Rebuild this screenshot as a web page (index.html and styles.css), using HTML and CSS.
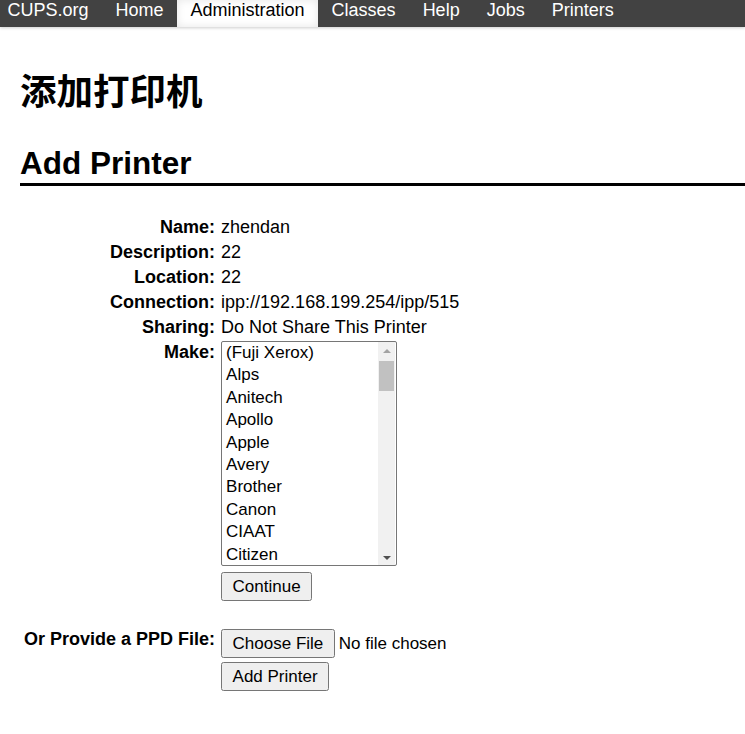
FILE: index.html
```
<!DOCTYPE html>
<html lang="zh">
<head>
<meta charset="utf-8">
<title>添加打印机 - CUPS</title>
<link rel="stylesheet" href="styles.css">
</head>
<body>
<div class="header">
  <ul class="nav">
    <li><a class="first" href="#">CUPS.org</a></li>
    <li><a href="#">Home</a></li>
    <li><a class="active" href="#">Administration</a></li>
    <li><a href="#">Classes</a></li>
    <li><a href="#">Help</a></li>
    <li><a href="#">Jobs</a></li>
    <li><a href="#">Printers</a></li>
  </ul>
</div>
<div class="body">
  <h1 class="title">添加打印机</h1>
  <h2 class="title2">Add Printer</h2>
  <form class="form">
    <table class="tbl">
      <tr><th class="label">Name:</th><td>zhendan</td></tr>
      <tr><th class="label">Description:</th><td>22</td></tr>
      <tr><th class="label">Location:</th><td>22</td></tr>
      <tr><th class="label">Connection:</th><td>ipp://192.168.199.254/ipp/515</td></tr>
      <tr><th class="label">Sharing:</th><td>Do Not Share This Printer</td></tr>
      <tr>
        <th class="label">Make:</th>
        <td>
          <div class="listbox">
            <select class="makes" name="PPD_MAKE" size="10">
              <option>(Fuji Xerox)</option>
              <option>Alps</option>
              <option>Anitech</option>
              <option>Apollo</option>
              <option>Apple</option>
              <option>Avery</option>
              <option>Brother</option>
              <option>Canon</option>
              <option>CIAAT</option>
              <option>Citizen</option>
              <option>Compaq</option>
              <option>DEC</option>
              <option>Dell</option>
              <option>Dymo</option>
              <option>Dymo-CoStar</option>
              <option>Epson</option>
              <option>Fujifilm</option>
              <option>Fujitsu</option>
              <option>Generic</option>
              <option>Genicom</option>
              <option>Gestetner</option>
              <option>Heidelberg</option>
              <option>Hitachi</option>
              <option>HP</option>
              <option>IBM</option>
              <option>Imagen</option>
              <option>Imagistics</option>
              <option>InfoPrint</option>
              <option>Infotec</option>
              <option>Intellitech</option>
              <option>Kodak</option>
              <option>KONICA MINOLTA</option>
              <option>Kyocera</option>
              <option>Lanier</option>
              <option>Lexmark</option>
              <option>Minolta</option>
              <option>Minolta QMS</option>
              <option>Mitsubishi</option>
              <option>NEC</option>
              <option>NRG</option>
              <option>Oce</option>
              <option>Oki</option>
              <option>Olivetti</option>
              <option>Olympus</option>
              <option>Panasonic</option>
              <option>PCPI</option>
              <option>Pentax</option>
              <option>QMS</option>
              <option>Raven</option>
              <option>Ricoh</option>
              <option>Samsung</option>
              <option>Savin</option>
              <option>Seiko</option>
              <option>Sharp</option>
              <option>SiPix</option>
              <option>Sony</option>
              <option>Star</option>
              <option>Tally</option>
              <option>Tektronix</option>
              <option>TOSHIBA</option>
              <option>Xerox</option>
              <option>Zebra</option>
            </select>
            <span class="sbar" aria-hidden="true">
              <span class="sb-btn"><span class="arrow-up"></span></span>
              <span class="sb-track"><span class="sb-thumb"></span></span>
              <span class="sb-btn"><span class="arrow-down"></span></span>
            </span>
          </div>
          <input class="btn" type="button" value="Continue">
        </td>
      </tr>
      <tr><td></td><td class="spacer">&nbsp;</td></tr>
      <tr>
        <th class="label">Or Provide a PPD File:</th>
        <td><input class="file" type="file" name="PPD_FILE"></td>
      </tr>
      <tr><td></td><td><input class="btn" type="button" value="Add Printer"></td></tr>
    </table>
  </form>
</div>
</body>
</html>
```

FILE: styles.css
```
html, body {
  margin: 0;
  padding: 0;
  background: #fff;
  color: #000;
  font-family: "Liberation Sans", Arial, "Noto Sans CJK SC", sans-serif;
  font-size: 18px;
}

.header {
  background: #424242;
  height: 27px;
  box-shadow: 0 1px 3px rgba(0, 0, 0, 0.2);
}

.nav {
  list-style: none;
  margin: 0;
  padding: 0;
  display: flex;
}

.nav a {
  display: block;
  height: 27px;
  box-sizing: border-box;
  padding: 0 13.5px;
  line-height: 21px;
  color: #fff;
  text-decoration: none;
}

.nav a.first {
  padding-left: 7.5px;
}

.nav a.active {
  background: #fff;
  color: #000;
  box-shadow: inset 0 0 8px rgba(0, 0, 0, 0.1);
}

.body {
  padding-left: 20px;
}

.title {
  font-family: "Noto Sans CJK SC", sans-serif;
  font-size: 36.5px;
  font-weight: bold;
  margin: 37px 0 0;
  line-height: 52px;
}

.title2 {
  font-size: 31.5px;
  font-weight: bold;
  margin: 29px 0 0;
  padding-bottom: 2px;
  line-height: 36px;
  border-bottom: 3px solid #000;
}

.form {
  margin: 28px 0 0;
}

.tbl {
  border-spacing: 2px;
  margin-left: 1px;
}

.tbl th,
.tbl td {
  padding: 1px;
  font-size: 18px;
  vertical-align: top;
}

.tbl th.label {
  padding-right: 3px;
}

.label {
  text-align: right;
  font-weight: bold;
}

.listbox {
  position: relative;
  width: 176px;
  height: 225px;
  margin: -1px 0 6px;
}

.makes {
  display: block;
  box-sizing: border-box;
  width: 176px;
  height: 225px;
  margin: 0;
  font-family: "Liberation Sans", Arial, sans-serif;
  font-size: 17px;
  color: #000;
  border: 1px solid #767676;
  border-radius: 2px;
  overflow: hidden;
}

.makes option {
  padding: 1px 4px 1px;
}

.sbar {
  position: absolute;
  top: 1px;
  right: 2px;
  bottom: 1px;
  width: 17px;
  background: #f1f1f1;
  display: flex;
  flex-direction: column;
}

.sb-btn {
  height: 17px;
  flex: none;
  display: flex;
  align-items: center;
  justify-content: center;
}

.sb-track {
  flex: 1;
  padding: 2px 1px 0;
}

.sb-thumb {
  display: block;
  height: 30px;
  background: #c1c1c1;
}

.arrow-up {
  width: 0;
  height: 0;
  border-left: 4px solid transparent;
  border-right: 4px solid transparent;
  border-bottom: 4px solid #a3a3a3;
  margin-top: 1px;
}

.arrow-down {
  width: 0;
  height: 0;
  border-left: 4px solid transparent;
  border-right: 4px solid transparent;
  border-top: 4px solid #505050;
  margin-top: 2px;
}

.btn,
.file::file-selector-button {
  font-family: "Liberation Sans", Arial, sans-serif;
  font-size: 17px;
  padding: 2.5px 9.5px;
  color: #000;
}

.btn {
  margin: 0;
}

.file {
  font-family: "Liberation Sans", Arial, sans-serif;
  font-size: 17px;
  margin: 0;
  color: #000;
}

.spacer {
  line-height: 20px;
}
```
